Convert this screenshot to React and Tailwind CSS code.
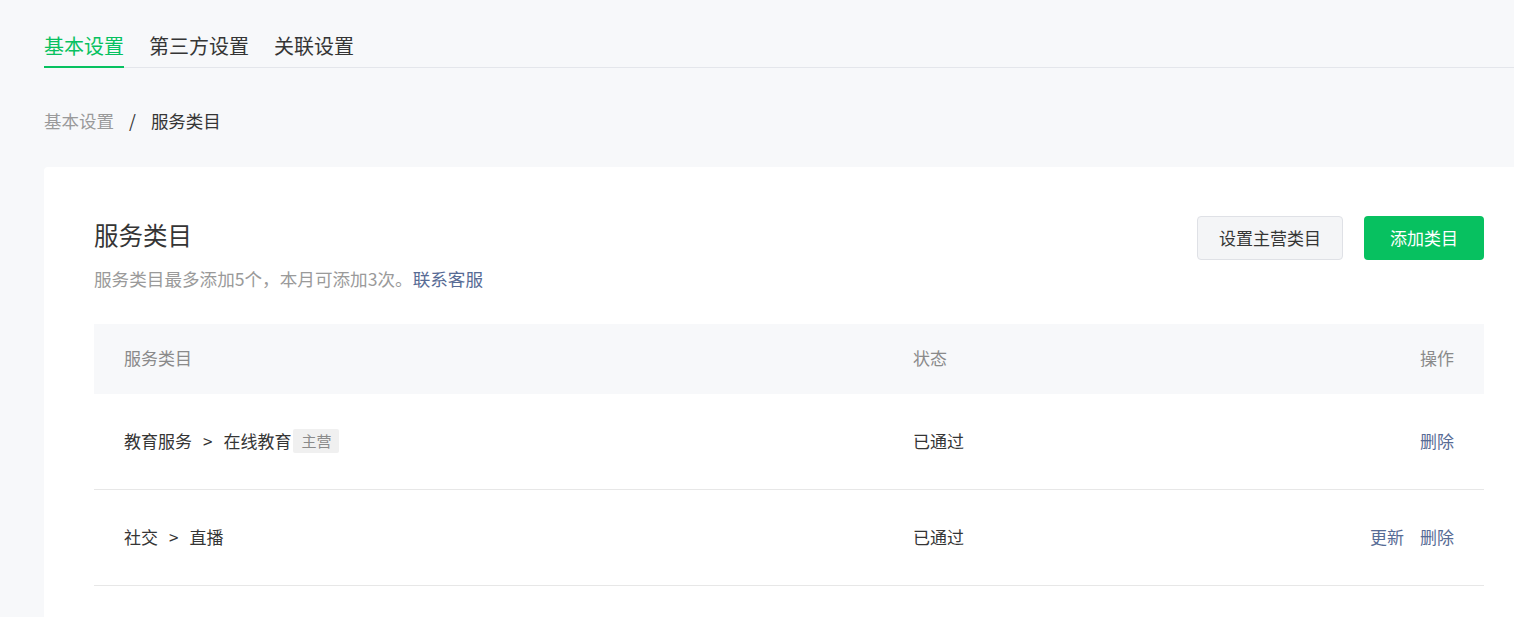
import React from 'react';

// Category rows in the table
const rows = [
    { parent: '教育服务', child: '在线教育', main: true, status: '已通过', actions: ['删除'] },
    { parent: '社交', child: '直播', main: false, status: '已通过', actions: ['更新', '删除'] },
];

const tabs = ['基本设置', '第三方设置', '关联设置'];

function App() {
    return (
        <div
            className="w-[1514px] h-[617px] overflow-hidden bg-[#f7f8fa] text-[#353535]"
            style={{ fontFamily: '"Noto Sans CJK SC", "Noto Sans", sans-serif' }}
        >
            {/* Top tabs */}
            <div className="ml-[44px] pt-[32px] flex border-b border-[#e4e6eb]">
                {tabs.map((t, i) => (
                    <div
                        key={t}
                        className={
                            'mr-[25px] pb-[6px] -mb-px text-[20px] leading-[28px] border-b-2 ' +
                            (i === 0 ? 'border-[#07c160] text-[#07c160]' : 'border-transparent text-[#353535]')
                        }
                    >
                        {t}
                    </div>
                ))}
            </div>

            {/* Breadcrumb */}
            <div className="ml-[44px] mt-[41px] flex items-center text-[17.5px] leading-[24px]">
                <span className="text-[#9a9a9a]">基本设置</span>
                <span className="mx-[15px] text-[#353535]">/</span>
                <span className="text-[#353535]">服务类目</span>
            </div>

            {/* Card */}
            <div className="ml-[44px] mt-[34px] w-[1490px] bg-white rounded-[4px] px-[50px] pt-[49px] pb-[40px]">
                <div className="flex items-start justify-between">
                    <div>
                        <div className="mt-[3px] text-[24.5px] leading-[32px] text-[#353535]">服务类目</div>
                        <div className="mt-[16px] text-[17.6px] leading-[24px] text-[#9a9a9a]">
                            服务类目最多添加5个，本月可添加3次。<span className="text-[#576b95]">联系客服</span>
                        </div>
                    </div>
                    <div className="flex gap-[21px]">
                        <button className="h-[44px] w-[146px] rounded-[4px] border border-[#dfe1e6] bg-[#f4f5f7] text-[17px] text-[#353535]">
                            设置主营类目
                        </button>
                        <button className="h-[44px] w-[120px] rounded-[4px] bg-[#07c160] text-[17px] text-white">
                            添加类目
                        </button>
                    </div>
                </div>

                {/* Table */}
                <div className="mt-[33px] text-[17px] leading-[24px]">
                    <div className="h-[70px] flex items-center bg-[#f7f8fa] px-[30px] pb-[2px] text-[#8a8a8a]">
                        <div className="w-[789px]">服务类目</div>
                        <div className="flex-1">状态</div>
                        <div>操作</div>
                    </div>
                    {rows.map((r) => (
                        <div key={r.child} className="h-[96px] flex items-center px-[30px] pb-[2px] border-b border-[#e7e7e7]">
                            <div className="w-[789px] flex items-center">
                                <span>{r.parent}</span>
                                <span className="px-[11px]">&gt;</span>
                                <span>{r.child}</span>
                                {r.main && (
                                    <span className="ml-[2px] px-[8px] h-[24px] leading-[24px] rounded-[2px] bg-[#f0f0f0] text-[15px] text-[#8a8a8a]">
                                        主营
                                    </span>
                                )}
                            </div>
                            <div className="flex-1">{r.status}</div>
                            <div className="flex gap-[16px] text-[#576b95]">
                                {r.actions.map((a) => (
                                    <span key={a}>{a}</span>
                                ))}
                            </div>
                        </div>
                    ))}
                </div>
            </div>
        </div>
    );
}

export default App;
